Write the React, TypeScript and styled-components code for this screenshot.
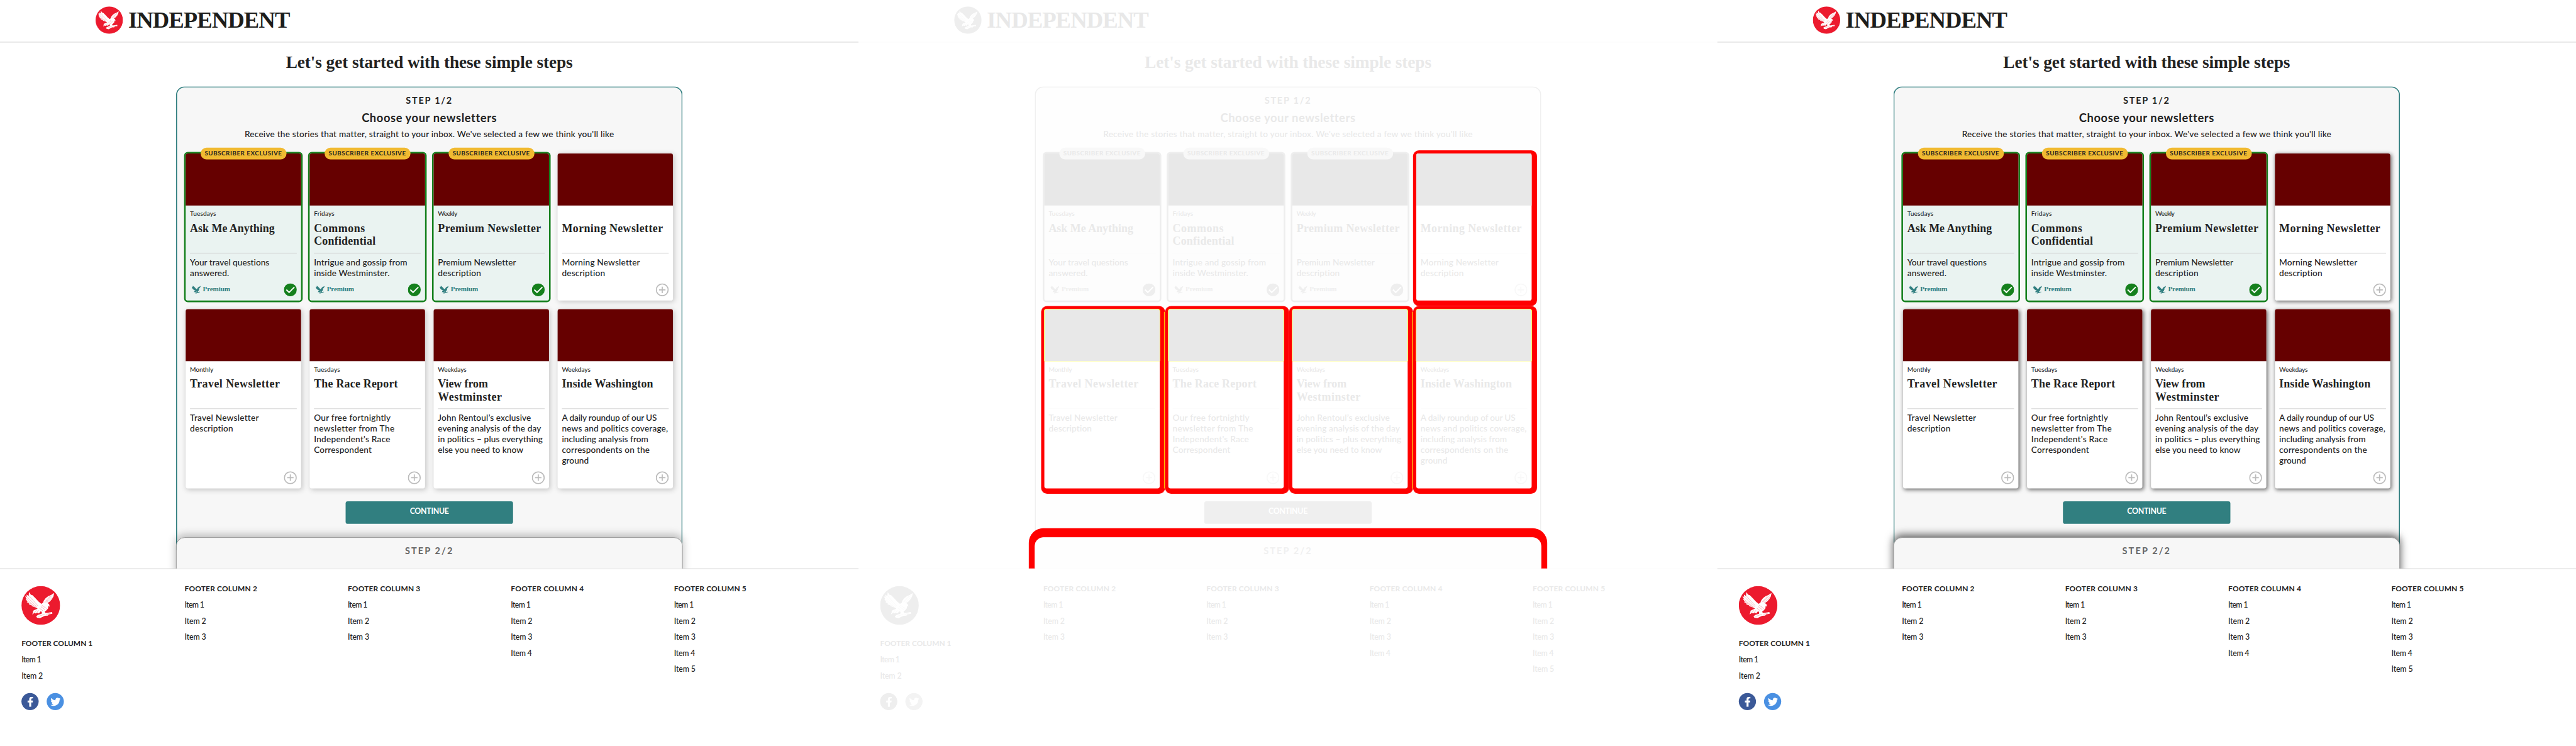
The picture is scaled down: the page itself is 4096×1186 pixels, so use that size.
import React from 'react';
import styled, { createGlobalStyle, css, ThemeProvider } from 'styled-components';
import { FaFacebookF, FaTwitter } from 'react-icons/fa';

const SANS = '"Lato", "Open Sans", sans-serif';
const SERIF = '"Liberation Serif", "Times New Roman", serif';
const SCALE = 4096 / 4800;

/* ---------- themes ---------- */

interface Palette {
  ink: string; wordmark: string; muted: string; rule: string; panel: string; teal: string;
  green: string; pick: string; image: string; badge: string; premium: string;
  plus: string; brand: string; facebook: string; twitter: string; stepEdge: string;
  cardShadow: string; stepShadow: string; diff: boolean;
}

const baseline: Palette = {
  ink: '#222222', wordmark: '#1d1d1b', muted: '#666666', rule: '#cccccc', panel: '#f7f7f7', teal: '#317f80',
  green: '#15801d', pick: '#eaf3f1', image: '#660000', badge: '#f1ba31', premium: '#317f80',
  plus: '#bbbbbb', brand: '#ec1a2e', facebook: '#3b5998', twitter: '#4a90e2', stepEdge: '#8a8a8a',
  cardShadow: '2px 2px 10px rgba(0, 0, 0, 0.2)',
  stepShadow: '0 -4px 15px rgba(0, 0, 0, 0.25)',
  diff: false,
};

const changed: Palette = {
  ...baseline,
  cardShadow: '2px 2px 8px rgba(0, 0, 0, 0.55)',
  stepShadow: '0 -4px 15px rgba(0, 0, 0, 0.6)',
};

const difference: Palette = {
  ink: '#e9e9e9', wordmark: '#e8e8e8', muted: '#f0f0f0', rule: '#fafafa', panel: '#fefefe', teal: '#efefef',
  green: '#eeeeee', pick: '#fdfdfd', image: '#e8e8e8', badge: '#f8f8f8', premium: '#efefef',
  plus: '#f8f8f8', brand: '#eeeeee', facebook: '#eeeeee', twitter: '#f3f3f3', stepEdge: '#fefefe',
  cardShadow: '2px 2px 0 8px #ff0000',
  stepShadow: '0 -6px 0 11px #ff0000',
  diff: true,
};

type T = { theme: any };

/* ---------- text tracked to a set width ---------- */

const pen = document.createElement('canvas').getContext('2d')!;

function tracking(text: string, font: string, width: number) {
  pen.font = font;
  const m = pen.measureText(text);
  const drawn = m.actualBoundingBoxLeft + m.actualBoundingBoxRight;
  return (width - drawn) / (text.length - 1);
}

interface Face { family: string; size: number; weight: number; leading: number }

const faces: Record<string, Face> = {
  headline: { family: SERIF, size: 32, weight: 700, leading: 40 },
  wordmark: { family: SERIF, size: 43, weight: 700, leading: 51 },
  step: { family: SANS, size: 17, weight: 700, leading: 24 },
  heading: { family: SANS, size: 21.5, weight: 700, leading: 28 },
  body: { family: SANS, size: 16, weight: 500, leading: 20 },
  small: { family: SANS, size: 12, weight: 500, leading: 16 },
  title: { family: SERIF, size: 21, weight: 700, leading: 24 },
  premium: { family: SERIF, size: 13, weight: 700, leading: 20 },
  badge: { family: SANS, size: 11.5, weight: 700, leading: 22 },
  button: { family: SANS, size: 14.5, weight: 700, leading: 20 },
  footHead: { family: SANS, size: 14, weight: 700, leading: 20 },
  footItem: { family: SANS, size: 14.5, weight: 500, leading: 30 },
};

const Line = styled.span<{ $face: Face; $track: number }>`
  display: block;
  white-space: nowrap;
  font: ${p => `${p.$face.weight} ${p.$face.size}px/${p.$face.leading}px ${p.$face.family}`};
  letter-spacing: ${p => p.$track.toFixed(3)}px;
`;

function Text({ face, width, children }: { face: string; width: number; children: string }) {
  const f = faces[face];
  return (
    <Line $face={f} $track={tracking(children, `${f.weight} ${f.size}px ${f.family}`, width)}>
      {children}
    </Line>
  );
}

/* ---------- page ---------- */

const Global = createGlobalStyle`
  *, *::before, *::after { box-sizing: border-box; }
  body { margin: 0; background: #ffffff; }
`;

const Viewport = styled.div`
  width: 4096px;
  height: 1186px;
  overflow: hidden;
`;

const Strip = styled.div`
  display: flex;
  width: 4800px;
  height: 1390px;
  transform: scale(${SCALE});
  transform-origin: 0 0;
`;

const Page = styled.section`
  display: flex;
  flex-direction: column;
  width: 1600px;
  height: 1390px;
  background: #ffffff;
  color: ${(p: T) => p.theme.ink};
`;

const Masthead = styled.header`
  display: flex;
  flex: none;
  gap: 10px;
  height: 79px;
  padding: 12px 0 0 178px;
  border-bottom: 1px solid ${(p: T) => p.theme.rule};
`;

const Wordmark = styled.div`
  color: ${(p: T) => p.theme.wordmark};
`;

const Main = styled.main`
  display: flex;
  flex: none;
  flex-direction: column;
  align-items: center;
  height: 980px;
  padding-top: 17px;
  overflow: hidden;
  text-align: center;
`;

const StepOne = styled.section`
  flex: none;
  width: 944px;
  height: 864px;
  margin-top: 25px;
  padding: 12px 16px 0;
  border: 2px solid ${(p: T) => p.theme.teal};
  border-bottom: none;
  border-radius: 16px 16px 0 0;
  background: ${(p: T) => p.theme.panel};
`;

const Intro = styled.div`
  display: grid;
  gap: 6px;
  padding-bottom: 26px;
`;

const Lead = styled.div`
  padding-top: 1px;
  margin-bottom: -1px;
`;

const StepTwo = styled.section`
  flex: none;
  position: relative;
  width: 944px;
  height: 80px;
  margin-top: -24px;
  padding-top: 12px;
  border: 1px solid ${(p: T) => p.theme.stepEdge};
  border-radius: 16px 16px 0 0;
  background: ${(p: T) => p.theme.panel};
  box-shadow: ${(p: T) => p.theme.stepShadow};
  color: ${(p: T) => p.theme.muted};
`;

const Cards = styled.div`
  display: grid;
  grid-template-columns: repeat(4, 215px);
  gap: 16px;
  padding-top: 1px;
  justify-content: center;
  text-align: left;
`;

const seams = css`
  &::after {
    content: '';
    position: absolute;
    top: 5px;
    bottom: 0;
    left: calc(100% + 8px);
    width: 4px;
    border: solid #ffff00;
    border-width: 0 1px;
  }
`;

const Card = styled.article<{ $picked: boolean; $seam: boolean }>`
  position: relative;
  display: flex;
  flex-direction: column;
  border-radius: 4px;
  background: ${(p: any) => (p.$picked ? p.theme.pick : '#ffffff')};
  box-shadow: ${(p: any) => (p.$picked ? `0 0 0 3px ${p.theme.green}` : p.theme.cardShadow)};
  ${(p: any) => p.theme.diff && p.$seam && seams}
`;

const Picture = styled.div<{ $outlined: boolean }>`
  height: 97px;
  border-radius: 4px 4px 0 0;
  background: ${(p: T) => p.theme.image};
  ${(p: any) => p.theme.diff && p.$outlined && css`
    box-shadow: 0 0 0 1px #ffff00;
    clip-path: inset(-1px -1px 0 -1px);
  `}
`;

const Badge = styled.div`
  position: absolute;
  top: -11px;
  left: 50%;
  transform: translateX(-50%);
  height: 22px;
  padding: 0 8px;
  border-radius: 11px;
  background: ${(p: T) => p.theme.badge};
`;

const CardBody = styled.div`
  display: flex;
  flex: 1;
  flex-direction: column;
  padding: 7px 8px 8px;
`;

const Frequency = styled.div`
  height: 16px;
`;

const CardTitle = styled.h3`
  height: 58px;
  margin: 7px 0 6px;
  box-sizing: content-box;
  border-bottom: 1px solid ${(p: T) => p.theme.rule};
`;

const CardFoot = styled.div`
  display: flex;
  align-items: center;
  justify-content: space-between;
  height: 24px;
  margin-top: auto;
`;

const Description = styled.div`
  padding-bottom: 10px;
`;

const Premium = styled.div`
  display: flex;
  align-items: center;
  gap: 4px;
  padding: 0 0 2px 3px;
  color: ${(p: T) => p.theme.premium};
`;

const Continue = styled.button`
  display: block;
  width: 312px;
  height: 42px;
  margin: 24px auto 0;
  padding: 0 0 5px;
  border: none;
  border-radius: 4px;
  background: ${(p: T) => p.theme.teal};
  color: #ffffff;
  text-align: center;
`;

const Footer = styled.footer`
  display: grid;
  flex: 1;
  grid-template-columns: repeat(5, 304px);
  padding: 27px 0 0 40px;
  border-top: 1px solid ${(p: T) => p.theme.rule};
  align-items: start;
`;

const FootColumn = styled.div<{ $first?: boolean }>`
  padding-top: ${p => (p.$first ? 5 : 0)}px;
`;

const FootLogo = styled.div`
  height: 97px;
`;

const FootList = styled.div`
  padding-top: 5px;
`;

const Social = styled.div`
  display: flex;
  gap: 15px;
  padding-top: 17px;
`;

const Round = styled.div<{ $network: 'facebook' | 'twitter' }>`
  display: flex;
  align-items: center;
  justify-content: center;
  width: 32px;
  height: 32px;
  border-radius: 50%;
  background: ${(p: any) => p.theme[p.$network]};
  color: #ffffff;
`;

/* ---------- drawings ---------- */

const Disc = styled.circle`
  fill: ${(p: T) => p.theme.brand};
`;

const Quills = styled.path`
  fill: none;
  stroke: ${(p: T) => p.theme.brand};
  stroke-width: 0.6;
  opacity: 0.6;
`;

const BIRD =
  'M14 11 L17.5 16 L20.5 17 L26 22.5 L32 29 L37 33 L40.2 31 L41.5 27 L45 22.5 L50 18.5 L55 16.5 L61 12.8 ' +
  'L59.5 19.5 L57 24 L53 28.5 L48.5 31.5 L51.5 33.5 L52.6 38.4 L50 37 L49.6 41.5 L46 45.5 L43.6 47 L44.6 50 ' +
  'L48.5 49.6 L57 48.3 L57.6 51.6 L51 52.6 L49 55 L43.5 55.2 L34.5 59.8 L29 58.8 L27.4 56 L31 53.6 L37.6 51.4 ' +
  'L38 48 L35.5 47.2 L32.6 51 L29.8 49.6 L26.5 51 L24 50 L20 53 L22 47.5 L20.6 46.5 L25 44.2 L30 42 L28.5 40.5 ' +
  'L22 38.4 L19 36.8 L19.4 35.8 L13.6 34 L14.6 32.6 L9.6 29.4 L11.4 28.8 L7.6 24 L9.6 24 L6.8 18.8 L10 20 L9.4 15.6 L13.4 18.4 Z';

const Eagle = ({ size }: { size: number }) => (
  <svg width={size} height={size} viewBox="0 0 72 72">
    <Disc cx="36" cy="36" r="36" />
    <path d={BIRD} fill="#ffffff" />
    <Quills d="M13 17 L31 37 M10.5 20 L29 38.5 M10 24.5 L27 39.5 M12 29 L26 39.5 M57 17 L45 30 M53.5 18.5 L43 30 M58 20.5 L47 30.5 M36 38 L44 44 M38 35.5 L47 42 M33.5 41 L40 46 M28 45 L24 49.6 M32 45 L28.6 49.4 M31 56.6 L43 52.4 M46 52.6 L55 50.4" />
  </svg>
);

const SmallEagle = () => (
  <svg width="17" height="15" viewBox="6.5 11 54.5 49" fill="currentColor">
    <path d={BIRD} />
  </svg>
);

const TickDisc = styled.circle`
  fill: ${(p: T) => p.theme.green};
`;

const Tick = () => (
  <svg width="24" height="24" viewBox="0 0 24 24">
    <TickDisc cx="12" cy="12" r="12" />
    <path d="M4.6 11.7 L9.7 16.8 L19.6 6.8" fill="none" stroke="#ffffff" strokeWidth="2.3" />
  </svg>
);

const PlusStroke = styled.g`
  fill: none;
  stroke: ${(p: T) => p.theme.plus};
  stroke-width: 2;
`;

const Plus = () => (
  <svg width="24" height="24" viewBox="0 0 24 24">
    <PlusStroke>
      <circle cx="12" cy="12" r="11" />
      <path d="M12 6 V18 M6 12 H18" />
    </PlusStroke>
  </svg>
);

/* ---------- content ---------- */

type Measured = [string, number];

interface Newsletter {
  when?: Measured;
  title: Measured[];
  text: Measured[];
  picked?: boolean;
}

const newsletters: Newsletter[] = [
  { when: ['Tuesdays', 48.3], title: [['Ask Me Anything', 159.3]], text: [['Your travel questions', 149.5], ['answered.', 72]], picked: true },
  { when: ['Fridays', 37], title: [['Commons', 93.7], ['Confidential', 114]], text: [['Intrigue and gossip from', 172.7], ['inside Westminster.', 140.3]], picked: true },
  { when: ['Weekly', 37], title: [['Premium Newsletter', 191.7]], text: [['Premium Newsletter', 144], ['description', 79.7]], picked: true },
  { title: [['Morning Newsletter', 188]], text: [['Morning Newsletter', 144], ['description', 79.7]] },
  { when: ['Monthly', 43.3], title: [['Travel Newsletter', 167]], text: [['Travel Newsletter', 127.7], ['description', 79.7]] },
  { when: ['Tuesdays', 48.3], title: [['The Race Report', 156.3]], text: [['Our free fortnightly', 144], ['newsletter from The', 148.7], ["Independent's Race", 140.7], ['Correspondent', 107.7]] },
  { when: ['Weekdays', 53], title: [['View from', 93.7], ['Westminster', 118.7]], text: [['John Rentoul’s exclusive', 173], ['evening analysis of the day', 193.3], ['in politics – plus everything', 196], ['else you need to know', 159.7]] },
  { when: ['Weekdays', 53], title: [['Inside Washington', 170.7]], text: [['A daily roundup of our US', 178.7], ['news and politics coverage,', 196.3], ['including analysis from', 160.7], ['correspondents on the', 163], ['ground', 49]] },
];

const footerColumns = [
  { n: 1, width: 131.4, items: 2 },
  { n: 2, width: 134, items: 3 },
  { n: 3, width: 134, items: 3 },
  { n: 4, width: 134.6, items: 4 },
  { n: 5, width: 133.6, items: 5 },
];

function NewsletterCard({ letter, index }: { letter: Newsletter; index: number }) {
  const picked = !!letter.picked;
  return (
    <Card $picked={picked} $seam={index === 4 || index === 6}>
      <Picture $outlined={index > 3} />
      {picked && <Badge><Text face="badge" width={144}>SUBSCRIBER EXCLUSIVE</Text></Badge>}
      <CardBody>
        <Frequency>{letter.when && <Text face="small" width={letter.when[1]}>{letter.when[0]}</Text>}</Frequency>
        <CardTitle>{letter.title.map(([t, w]) => <Text key={t} face="title" width={w}>{t}</Text>)}</CardTitle>
        <Description>{letter.text.map(([t, w]) => <Text key={t} face="body" width={w}>{t}</Text>)}</Description>
        <CardFoot>
          {picked ? <Premium><SmallEagle /><Text face="premium" width={51}>Premium</Text></Premium> : <span />}
          {picked ? <Tick /> : <Plus />}
        </CardFoot>
      </CardBody>
    </Card>
  );
}

function NewsletterPage() {
  return (
    <Page>
      <Masthead>
        <Eagle size={51} />
        <Wordmark><Text face="wordmark" width={301}>INDEPENDENT</Text></Wordmark>
      </Masthead>
      <Main>
        <Text face="headline" width={534}>Let's get started with these simple steps</Text>
        <StepOne>
          <Intro>
            <Text face="step" width={86}>STEP 1/2</Text>
            <Text face="heading" width={251}>Choose your newsletters</Text>
            <Lead>
              <Text face="body" width={688}>Receive the stories that matter, straight to your inbox. We've selected a few we think you'll like</Text>
            </Lead>
          </Intro>
          <Cards>
            {newsletters.map((n, i) => <NewsletterCard key={i} letter={n} index={i} />)}
          </Cards>
          <Continue><Text face="button" width={72.7}>CONTINUE</Text></Continue>
        </StepOne>
        <StepTwo><Text face="step" width={89}>STEP 2/2</Text></StepTwo>
      </Main>
      <Footer>
        {footerColumns.map(c => (
          <FootColumn key={c.n} $first={c.n === 1}>
            {c.n === 1 && <FootLogo><Eagle size={72} /></FootLogo>}
            <Text face="footHead" width={c.width}>{`FOOTER COLUMN ${c.n}`}</Text>
            <FootList>
              {Array.from({ length: c.items }, (_, i) => (
                <Text key={i} face="footItem" width={i === 0 ? 35.5 : 38.6}>{`Item ${i + 1}`}</Text>
              ))}
            </FootList>
            {c.n === 1 && (
              <Social>
                <Round $network="facebook"><FaFacebookF size={19} /></Round>
                <Round $network="twitter"><FaTwitter size={19} /></Round>
              </Social>
            )}
          </FootColumn>
        ))}
      </Footer>
    </Page>
  );
}

export default function App() {
  return (
    <>
      <Global />
      <Viewport>
        <Strip>
          {[baseline, difference, changed].map((palette, i) => (
            <ThemeProvider key={i} theme={palette}><NewsletterPage /></ThemeProvider>
          ))}
        </Strip>
      </Viewport>
    </>
  );
}
